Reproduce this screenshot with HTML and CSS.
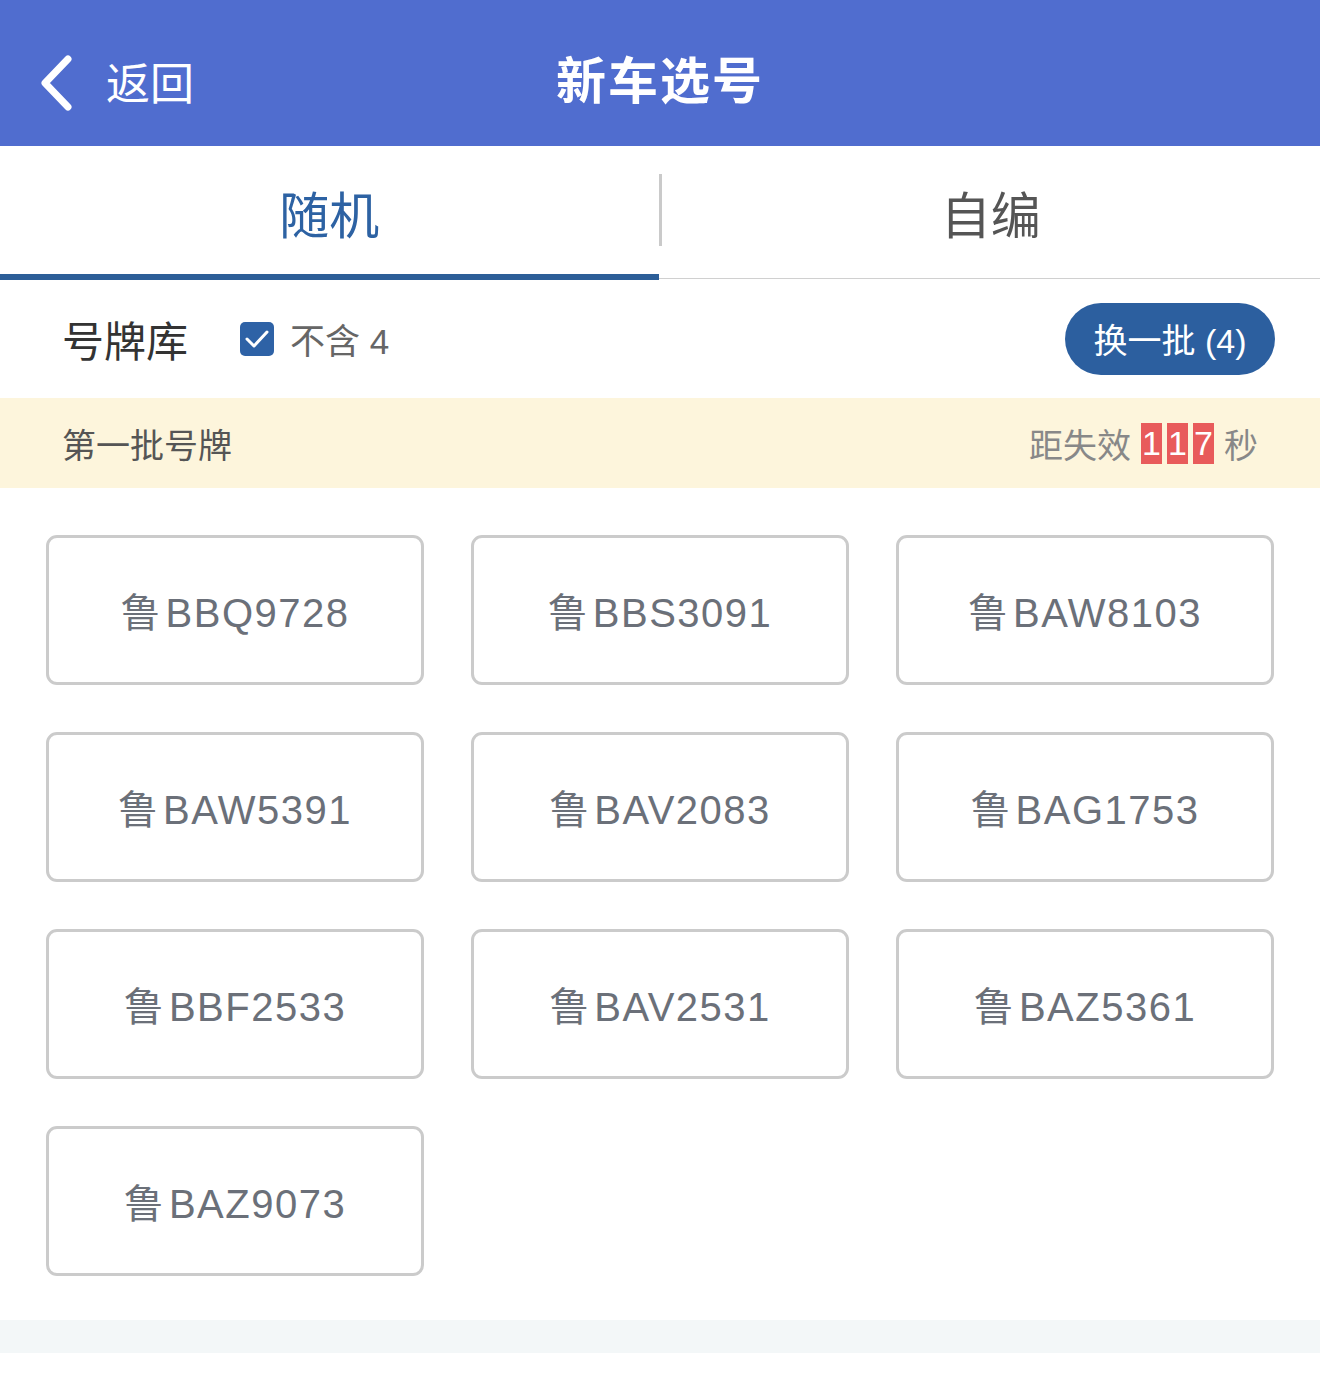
FILE: index.html
```html
<!DOCTYPE html>
<html>
<head>
    <meta charset="utf-8">
    <title>新车选号</title>
    <link rel="stylesheet" href="styles.css">
</head>
<body>
    <div class="header">
        <div class="back">
            <svg class="back-icon" width="36" height="58" viewBox="0 0 36 58">
                <path d="M30 5 L7 29 L30 53" fill="none" stroke="#fff" stroke-width="7" stroke-linecap="round" stroke-linejoin="round"/>
            </svg>
            <span class="back-text">返回</span>
        </div>
        <h1 class="title">新车选号</h1>
    </div>

    <div class="tabs">
        <div class="tab active">随机</div>
        <div class="tab-sep"></div>
        <div class="tab">自编</div>
    </div>

    <div class="toolbar">
        <div class="lib">号牌库</div>
        <label class="check">
            <span class="box">
                <svg width="26" height="22" viewBox="0 0 26 22"><path d="M3 11 L10 18 L23 4" fill="none" stroke="#fff" stroke-width="3" stroke-linecap="round" stroke-linejoin="round"/></svg>
            </span>
            不含 4
        </label>
        <button class="refresh">换一批 (4)</button>
    </div>

    <div class="batch">
        <span>第一批号牌</span>
        <span class="timer">距失效 <b class="digit">1</b><b class="digit">1</b><b class="digit last">7</b> 秒</span>
    </div>

    <div class="plates">
        <div class="plate">鲁 BBQ9728</div>
        <div class="plate">鲁 BBS3091</div>
        <div class="plate">鲁 BAW8103</div>
        <div class="plate">鲁 BAW5391</div>
        <div class="plate">鲁 BAV2083</div>
        <div class="plate">鲁 BAG1753</div>
        <div class="plate">鲁 BBF2533</div>
        <div class="plate">鲁 BAV2531</div>
        <div class="plate">鲁 BAZ5361</div>
        <div class="plate">鲁 BAZ9073</div>
    </div>

    <div class="footer-strip"></div>
</body>
</html>
```

FILE: styles.css
```css
body { margin: 0; font-family: "Liberation Sans", "Noto Sans CJK SC", sans-serif; background: #fff; }

.header { position: relative; height: 146px; background: #506dcf; color: #fff; display: flex; align-items: center; justify-content: center; }
.back { position: absolute; left: 38px; top: 51px; display: flex; align-items: center; gap: 32px; font-size: 44px; line-height: 60px; }
.back-icon { display: block; }
.back-text { padding-top: 4px; }
.title { margin: 0; font-size: 50px; font-weight: bold; letter-spacing: 2px; padding-top: 8px; }

.tabs { display: flex; align-items: center; height: 132px; border-bottom: 1px solid #d0d0d0; }
.tab { flex: 1; height: 100%; display: flex; align-items: center; justify-content: center; font-size: 50px; color: #555; box-sizing: border-box; }
.tab.active { color: #2d62a3; border-bottom: 6px solid #2c5e98; margin-bottom: -3px; padding-top: 3px; }
.tab-sep { width: 3px; height: 72px; background: #cacaca; margin-top: -4px; }

.toolbar { display: flex; align-items: center; height: 119px; padding: 0 45px 0 62px; }
.lib { font-size: 42px; color: #333; margin-right: 52px; }
.check { display: flex; align-items: center; gap: 16px; font-size: 35px; color: #666; }
.box { width: 34px; height: 34px; border-radius: 5px; background: #2e62a6; display: flex; align-items: center; justify-content: center; }
.refresh { margin-left: auto; width: 210px; height: 72px; border: none; border-radius: 36px; background: #2c5f9f; color: #fff; font-family: inherit; font-size: 34px; padding: 0; }

.batch { height: 90px; background: #fdf5dc; display: flex; align-items: center; justify-content: space-between; padding: 0 62px; font-size: 34px; color: #555; }
.timer { color: #888; display: flex; align-items: center; }
.digit { display: inline-block; width: 21px; height: 41px; margin-left: 5px; background: #e85b5b; color: #fff; font-weight: normal; font-size: 34px; line-height: 41px; text-align: center; }
.digit:first-child { margin-left: 10px; }
.digit.last { margin-right: 10px; }

.plates { display: grid; grid-template-columns: repeat(3, 1fr); gap: 47px 47px; padding: 47px 46px 44px; }
.plate { height: 150px; box-sizing: border-box; border: 3px solid #cbcbcb; border-radius: 11px; display: flex; align-items: center; justify-content: center; font-size: 40px; color: #6b7079; letter-spacing: 1.5px; word-spacing: -9px; }

.footer-strip { height: 33px; background: #f3f7f8; }
```
